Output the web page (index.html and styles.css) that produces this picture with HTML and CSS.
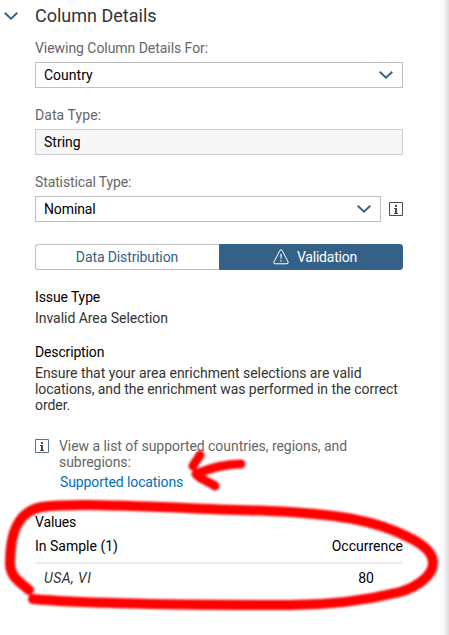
FILE: index.html
```
<!DOCTYPE html>
<html lang="en">
<head>
<meta charset="utf-8">
<title>Column Details</title>
<link rel="stylesheet" href="styles.css">
</head>
<body>
<main class="panel">
  <header class="panel-header">
    <svg class="chevron" viewBox="0 0 14 8"><path d="M.7.8 7 6.6 13.3.8"/></svg>
    <h1><span class="t-title">Column Details</span></h1>
  </header>
  <div class="content">
    <section class="field">
      <label><span class="t-viewing">Viewing Column Details For:</span></label>
      <div class="box select"><span class="t-country">Country</span><svg class="chevron" viewBox="0 0 14 8"><path d="M.7.8 7 6.6 13.3.8"/></svg></div>
    </section>
    <section class="field">
      <label><span class="t-datatype">Data Type:</span></label>
      <div class="box readonly"><span class="t-string">String</span></div>
    </section>
    <section class="field">
      <label><span class="t-stat">Statistical Type:</span></label>
      <div class="field-row">
        <div class="box select"><span class="t-nominal">Nominal</span><svg class="chevron" viewBox="0 0 14 8"><path d="M.7.8 7 6.6 13.3.8"/></svg></div>
        <svg class="info" viewBox="0 0 14 14"><path class="frame" d="M.5.5h13v13H.5z"/><path class="mark" d="M6 3h2v2H6zM5 6h3v5h1v1H5v-1h1V7H5z"/></svg>
      </div>
    </section>
    <nav class="segments">
      <button class="segment"><span class="t-dist">Data Distribution</span></button>
      <button class="segment selected">
        <svg class="warning" viewBox="0 0 16 16"><path class="outline" d="M7 1.3Q8 0 9 1.3l6 11.4q.8 2-1 2.1H2q-1.800-.1-1-2.100z"/><path class="bang" d="M7.300 5h1.400L8.400 10h-.8zM7.300 11.200h1.400v1.300H7.300z"/></svg>
        <span class="t-valid">Validation</span>
      </button>
    </nav>
    <section class="issue">
      <h2><span class="t-issue">Issue Type</span></h2>
      <p><span class="t-invalid">Invalid Area Selection</span></p>
    </section>
    <section class="description">
      <h2><span class="t-desc">Description</span></h2>
      <p><span class="t-ensure">Ensure that your area enrichment selections are valid</span><br><span class="t-loc">locations, and the enrichment was performed in the correct</span><br><span class="t-order">order.</span></p>
    </section>
    <section class="hint">
      <svg class="info" viewBox="0 0 14 14"><path class="frame" d="M.5.5h13v13H.5z"/><path class="mark" d="M6 3h2v2H6zM5 6h3v5h1v1H5v-1h1V7H5z"/></svg>
      <div>
        <p><span class="t-view">View a list of supported countries, regions, and</span><br><span class="t-sub">subregions:</span></p>
        <a><span class="t-support">Supported locations</span></a>
      </div>
    </section>
    <section class="values">
      <h2><span class="t-values">Values</span></h2>
      <div class="table-head"><span class="t-sample">In Sample (1)</span><span class="t-occ">Occurrence</span></div>
      <div class="table-row"><em class="t-usa">USA, VI</em><span>80</span></div>
    </section>
  </div>
  <svg class="annotations" viewBox="0 0 449 635">
    <path class="pen" d="M29 590C20 582 10 577 10 563C10 532 18 511 42 507C80 502 170 508 270 511C340 514 377 521 408 537C425 545 433 554 433 563C433 577 414 588 400 592C355 603 315 605 290 605C210 605 90 604 33 599"/>
    <path class="pen arrow" d="M200 455C198 459 195 462 193 466M241 464C225 464 210 468 196 474C199 479 208 481 215 486"/>
  </svg>
</main>
</body>
</html>
```
FILE: styles.css
```
* { box-sizing: border-box; }
body { margin: 0; background: #fff; font: 14px/16px Roboto, "Liberation Sans", sans-serif; color: #333; }
h1, h2, p { margin: 0; font-weight: 400; }
h1 { font-size: 18px; line-height: 20px; }
h2 { font-size: 14px; line-height: 16px; color: #000; }
span, em { white-space: nowrap; }
svg { display: block; flex: none; }
.panel { position: relative; width: 449px; height: 635px; overflow: hidden; background: linear-gradient(to right, transparent 439px, #f7f7f7 444px, #dcdcdc 449px); }
.panel-header { display: flex; align-items: center; gap: 17px; padding: 6px 0 0 4px; height: 26px; }
.content { width: 368px; margin-left: 35px; padding-top: 14px; }
.field { height: 67px; }
.field label { display: block; height: 22px; color: #666; }
.field-row { display: flex; align-items: center; gap: 8px; }
.box { display: flex; align-items: center; justify-content: space-between; height: 26px; width: 100%; border: 1px solid #bfbfbf; padding: 0 9px 0 8px; background: #fff; color: #000; }
.readonly { background: #f7f7f7; border-color: #ccc; }
.chevron { width: 14px; height: 8px; }
.chevron path { fill: none; stroke: #346187; stroke-width: 1.9; }
.info { width: 14px; height: 14px; }
.info .frame { fill: none; stroke: #494949; }
.info .mark { fill: #494949; }
.segments { display: grid; grid-template-columns: 1fr 1fr; margin-top: 3px; height: 26px; }
.segment { display: flex; align-items: center; justify-content: center; gap: 8px; padding: 0 1px 0 0; border: 1px solid #bfbfbf; border-right: 0; border-radius: 3px 0 0 3px; background: #fff; color: #346187; font: inherit; }
.segment.selected { border: 1px solid #346187; border-radius: 0 3px 3px 0; background: #346187; color: #fff; padding: 0 0 0 8px; }
.warning { width: 16px; height: 16px; }
.warning .outline { fill: none; stroke: #fff; stroke-width: 1; }
.warning .bang { fill: #fff; }
.issue { margin-top: 19px; }
.issue p, .description p { margin-top: 5px; }
.description { margin-top: 18px; }
.hint { display: flex; gap: 10px; margin-top: 25px; color: #666; }
.hint .info { margin-top: 1px; }
.hint .info .frame { stroke: #5b738b; }
.hint a { display: block; margin: 4px 0 0 1px; color: #0070b1; }
.values { margin-top: 24px; color: #000; }
.table-head { display: flex; justify-content: space-between; margin-top: 8px; padding-bottom: 8px; border-bottom: 2px solid #ebebeb; }
.table-row { display: flex; justify-content: space-between; padding: 6px 29px 0 9px; }
.table-row em { color: #333; }
.t-viewing { letter-spacing: -.05px; }
.t-datatype { letter-spacing: .08px; }
.t-stat { letter-spacing: -.12px; }
.t-nominal { letter-spacing: -.12px; }
.t-dist { letter-spacing: -.12px; }
.t-valid { letter-spacing: -.2px; }
.t-issue { letter-spacing: -.12px; }
.t-invalid { letter-spacing: -.04px; }
.t-desc { letter-spacing: -.15px; }
.t-ensure { letter-spacing: -.035px; }
.t-loc { letter-spacing: -.065px; }
.t-order { letter-spacing: -.05px; }
.t-view, .t-sub { letter-spacing: -.05px; }
.t-support { letter-spacing: -.12px; }
.t-values { letter-spacing: -.15px; }
.t-usa { letter-spacing: .45px; }
.annotations { position: absolute; inset: 0; width: 449px; height: 635px; filter: blur(1.2px); }
.pen { fill: none; stroke: #f00; stroke-width: 10; stroke-linecap: round; stroke-linejoin: round; }
.pen.arrow { stroke-width: 9; }
```
